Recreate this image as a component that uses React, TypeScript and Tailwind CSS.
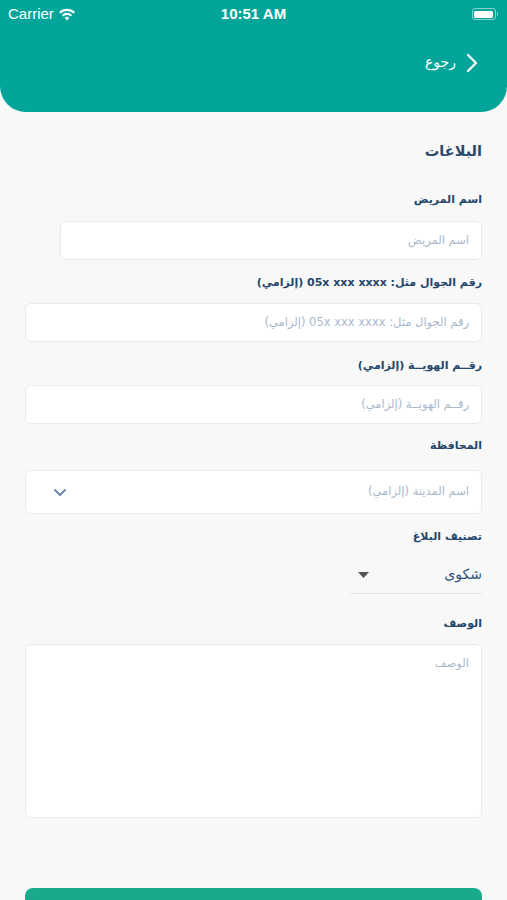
import React from "react";

const arabic = { fontFamily: '"DejaVu Sans", "Noto Sans", sans-serif' };

function Label({ children, className = "" }: { children: React.ReactNode; className?: string }) {
  return (
    <div className={"h-4 text-[11px] font-bold leading-4 text-[#24466b] " + className}>{children}</div>
  );
}

function Field({ placeholder, className = "" }: { placeholder: string; className?: string }) {
  return (
    <div
      className={
        "flex h-[39px] items-center rounded-md border border-[#e8ebee] bg-white pr-3 text-[11.5px] text-[#a9b9cc] " +
        className
      }
    >
      {placeholder}
    </div>
  );
}

export default function App() {
  return (
    <div className="min-h-[900px] w-[507px] overflow-hidden bg-[#f8f8f8]" style={arabic}>
      {/* header */}
      <header className="h-[112px] rounded-b-[26px] bg-[#03a59b] text-white">
        <div
          className="flex h-7 items-center justify-between px-2 text-[15px]"
          style={{ fontFamily: '"Liberation Sans", Arial, sans-serif' }}
        >
          <div className="flex w-[120px] items-center gap-1">
            <span>Carrier</span>
            <svg width="18" height="13" viewBox="0 0 18 13" fill="white">
              <path d="M9 12.5l2.3-2.6a3.3 3.3 0 0 0-4.6 0z" />
              <path d="M3.9 6.9l1.5 1.6a5.2 5.2 0 0 1 7.2 0l1.5-1.6a7.4 7.4 0 0 0-10.2 0z" />
              <path d="M1 3.9l1.5 1.6a9.5 9.5 0 0 1 13 0L17 3.9a11.7 11.7 0 0 0-16 0z" />
            </svg>
          </div>
          <span className="font-semibold">10:51 AM</span>
          <div className="flex w-[120px] justify-end pr-[1px]">
            <div className="flex items-center">
              <div className="flex h-[12px] w-[24px] items-center rounded-[3px] border border-white/50 p-[1.5px]">
                <div className="h-full w-full rounded-[1.5px] bg-white" />
              </div>
              <div className="ml-[1px] h-[4px] w-[1.5px] rounded-r-sm bg-white/50" />
            </div>
          </div>
        </div>
        <div className="mt-6 flex items-center justify-end gap-[10px] pr-[29px]" dir="ltr">
          <span className="text-[14px]">رجوع</span>
          <svg width="12" height="20" viewBox="0 0 12 20" fill="none" stroke="white" strokeWidth="2.2" strokeLinecap="round" strokeLinejoin="round">
            <path d="M2 2l8 8-8 8" />
          </svg>
        </div>
      </header>

      {/* form */}
      <main dir="rtl" className="pl-[25px] pr-[25px]">
        <h1 className="mt-[29px] h-5 text-[14.5px] font-bold leading-5 text-[#2b4a6c]">البلاغات</h1>

        <Label className="mt-[31px]">اسم المريض</Label>
        <Field placeholder="اسم المريض" className="ml-[35px] mt-[13px]" />

        <Label className="mt-[15px]">رقم الجوال مثل: 05x xxx xxxx (إلزامي)</Label>
        <Field placeholder="رقم الجوال مثل: 05x xxx xxxx (إلزامي)" className="mt-3 h-[38px]" />

        <Label className="mt-4">رقــم الهويــة (إلزامي)</Label>
        <Field placeholder="رقــم الهويــة (إلزامي)" className="mt-[11px] h-[38px]" />

        <Label className="mt-[14px]">المحافظة</Label>
        <div className="mt-4 flex h-[44px] items-center justify-between rounded-md border border-[#e8ebee] bg-white pl-[27px] pr-3 text-[11.5px] text-[#a9b9cc]">
          <span>اسم المدينة (إلزامي)</span>
          <svg width="14" height="9" viewBox="0 0 14 9" fill="none" stroke="#6f89aa" strokeWidth="2" strokeLinecap="round" strokeLinejoin="round">
            <path d="M2 2l5 5 5-5" />
          </svg>
        </div>

        <Label className="mt-[15px]">تصنيف البلاغ</Label>
        <div className="mt-[11px] flex h-[38px] w-[132px] items-center justify-between border-b border-[#e2e4e7] pl-[8px] text-[14px] text-[#2f5478]">
          <span>شكوى</span>
          <svg width="11" height="6" viewBox="0 0 11 6" fill="#555">
            <path d="M0 0h11L5.5 6z" />
          </svg>
        </div>

        <Label className="mt-[22px]">الوصف</Label>
        <div className="mt-3 h-[174px] rounded-md border border-[#e8ebee] bg-white pr-3 pt-[10px] text-[11.5px] text-[#a9b9cc]">
          الوصف
        </div>

        <button className="mt-[70px] block h-[50px] w-full rounded-t-[8px] bg-[#17ab8c]" />
      </main>
    </div>
  );
}
